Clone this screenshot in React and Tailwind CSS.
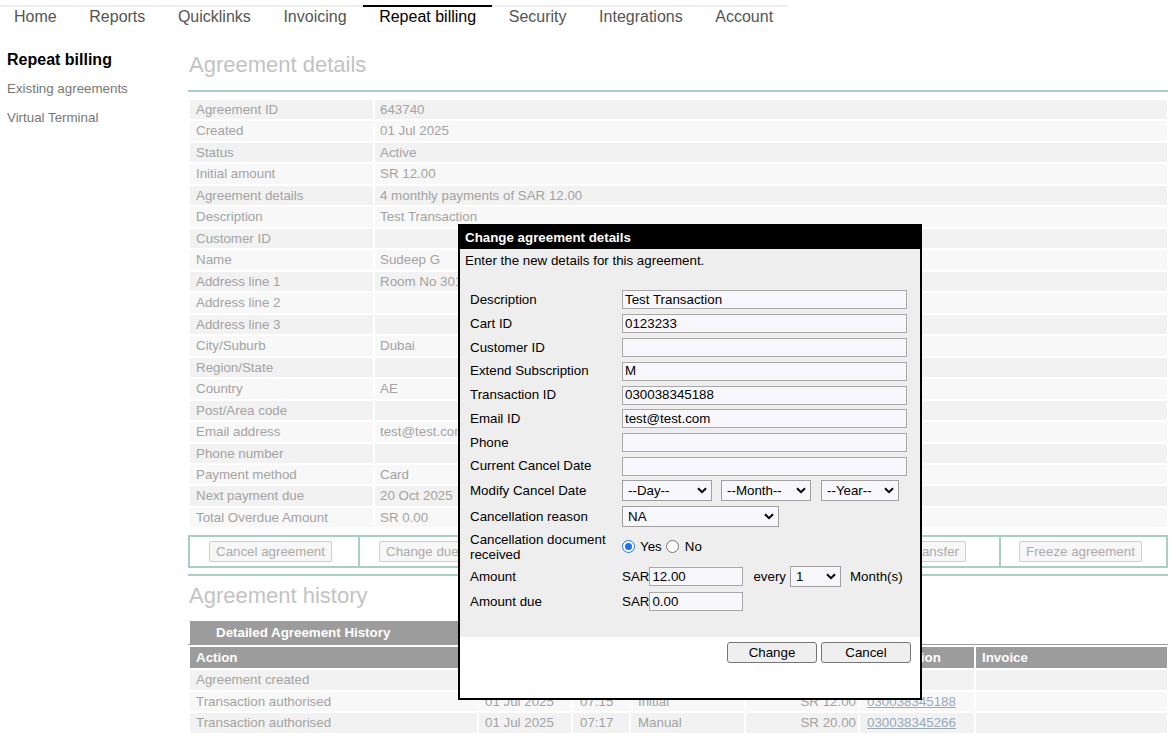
import React from "react";

const tabs = ["Home", "Reports", "Quicklinks", "Invoicing", "Repeat billing", "Security", "Integrations", "Account"];

const details = [
  ["Agreement ID", "643740"],
  ["Created", "01 Jul 2025"],
  ["Status", "Active"],
  ["Initial amount", "SR 12.00"],
  ["Agreement details", "4 monthly payments of SAR 12.00"],
  ["Description", "Test Transaction"],
  ["Customer ID", ""],
  ["Name", "Sudeep G"],
  ["Address line 1", "Room No 301"],
  ["Address line 2", ""],
  ["Address line 3", ""],
  ["City/Suburb", "Dubai"],
  ["Region/State", ""],
  ["Country", "AE"],
  ["Post/Area code", ""],
  ["Email address", "test@test.com"],
  ["Phone number", ""],
  ["Payment method", "Card"],
  ["Next payment due", "20 Oct 2025"],
  ["Total Overdue Amount", "SR 0.00"],
];

const history = [
  ["Agreement created", "", "", "", "", ""],
  ["Transaction authorised", "01 Jul 2025", "07:15", "Initial", "SR 12.00", "030038345188"],
  ["Transaction authorised", "01 Jul 2025", "07:17", "Manual", "SR 20.00", "030038345266"],
];

function Chevron() {
  return (
    <svg width="10" height="7" viewBox="0 0 10 7" className="shrink-0">
      <path d="M1 1.2 L5 5.2 L9 1.2" fill="none" stroke="#000" strokeWidth="2" />
    </svg>
  );
}

function Select({ value, w }) {
  return (
    <div className={`flex h-[21px] items-center justify-between border border-[#a0a0a0] bg-[#f7f7fc] pl-[5px] pr-[4px] ${w}`}>
      <span>{value}</span>
      <Chevron />
    </div>
  );
}

function Input({ value = "", w = "w-[285px]" }) {
  return (
    <div className={`flex h-[19px] items-center border border-[#a8a8a8] bg-[#f7f7fc] pl-[2px] ${w}`}>
      {value}
    </div>
  );
}

function FormRow({ label, h, children, labelCls = "" }) {
  return (
    <div className={`flex items-center ${h}`}>
      <div className={`w-[152px] shrink-0 ${labelCls}`}>{label}</div>
      <div className="flex items-center">{children}</div>
    </div>
  );
}

function BgButton({ children }) {
  return (
    <div className="inline-flex h-[21px] items-center whitespace-nowrap rounded-[2px] border border-[#cfcfcf] bg-[#f7f7f7] px-[6px] text-[#ababab]">
      {children}
    </div>
  );
}

export default function App() {
  return (
    <div className="relative h-[736px] w-[1172px] overflow-hidden bg-white font-['Liberation_Sans',Arial,sans-serif] text-[13.33px]">
      {/* Top navigation */}
      <div className="h-[28px] pt-[5px]">
        <div className="flex w-[788px] border-t-2 border-[#eeeeee]">
          {tabs.map((t, i) => (
            <div
              key={t}
              className={`-mt-[2px] shrink-0 whitespace-nowrap border-t-2 px-[16.3px] pt-[1px] text-[16px] leading-[18px] ${i === 0 ? "-ml-[2.3px]" : ""} ${
                t === "Repeat billing" ? "border-black text-black" : "border-transparent text-[#555]"
              }`}
            >
              {t}
            </div>
          ))}
        </div>
      </div>

      <div className="flex">
        {/* Sidebar */}
        <div className="w-[188px] shrink-0 pl-[7px]">
          <div className="mt-[22px] text-[16px] font-bold leading-[20px] text-black">Repeat billing</div>
          <div className="mt-[10px] leading-[18px] text-[#777]">Existing agreements</div>
          <div className="mt-[11px] leading-[18px] text-[#777]">Virtual Terminal</div>
        </div>

        {/* Main */}
        <div className="w-[980px] shrink-0">
          <div className="mt-[24px] pl-[1px] text-[22px] leading-[26px] text-[#c3c3c3]">Agreement details</div>
          <div className="mt-[12px] h-[2px] bg-[#a7d0c1]" />
          <div className="mt-[8px] flex flex-col gap-[2px] pl-[2px] pr-[1px] text-[#a3a3a3]">
            {details.map(([l, v], i) => (
              <div key={l} className="flex gap-[2px]">
                <div className={`h-[19.47px] w-[183px] shrink-0 pl-[6px] leading-[19.47px] ${i % 2 ? "bg-[#f8f8f8]" : "bg-[#f2f2f2]"}`}>{l}</div>
                <div className={`h-[19.47px] flex-1 pl-[5px] leading-[19.47px] ${i % 2 ? "bg-[#f8f8f8]" : "bg-[#f2f2f2]"}`}>{v}</div>
              </div>
            ))}
          </div>

          {/* Action buttons */}
          <div className="mt-[8px] flex h-[33px] border-2 border-[#a7d0c1]">
            <div className="flex w-[168px] items-center pl-[19px]">
              <BgButton>Cancel agreement</BgButton>
            </div>
            <div className="flex w-[321px] items-center border-l-2 border-[#a7d0c1] pl-[19px]">
              <BgButton>Change due date</BgButton>
            </div>
            <div className="flex w-[320px] items-center justify-end border-l-2 border-[#a7d0c1] pr-[33px]">
              <BgButton>Card transfer</BgButton>
            </div>
            <div className="flex flex-1 items-center border-l-2 border-[#a7d0c1] pl-[18px]">
              <BgButton>Freeze agreement</BgButton>
            </div>
          </div>
          <div className="mt-[6px] h-[2px] bg-[#a7d0c1]" />

          <div className="mt-[7px] pl-[1px] text-[22px] leading-[26px] text-[#c3c3c3]">Agreement history</div>

          <div className="mt-[12px] border-b border-[#9c9c9c] pl-[2px]">
            <div className="flex h-[23px] w-[272px] items-center bg-[#9c9c9c] pl-[26px] font-bold text-white">
              Detailed Agreement History
            </div>
          </div>
          <div className="mt-[2px] flex flex-col gap-[2px] pl-[2px] pr-[1px]">
            <div className="flex h-[21px] gap-[2px] font-bold text-white">
              <div className="w-[287px] bg-[#9c9c9c] pl-[6px] leading-[21px]">Action</div>
              <div className="w-[92px] bg-[#9c9c9c] pl-[6px] leading-[21px]">Date</div>
              <div className="w-[56px] bg-[#9c9c9c] pl-[6px] leading-[21px]">Time</div>
              <div className="w-[113px] bg-[#9c9c9c] pl-[6px] leading-[21px]">Type</div>
              <div className="w-[112px] bg-[#9c9c9c] pl-[6px] leading-[21px]">Amount</div>
              <div className="w-[114px] bg-[#9c9c9c] pl-[6px] leading-[21px]">Transaction</div>
              <div className="flex-1 bg-[#9c9c9c] pl-[6px] leading-[21px]">Invoice</div>
            </div>
            {history.map((r, i) => {
              const bg = i % 2 ? "bg-[#f8f8f8]" : "bg-[#f2f2f2]";
              return (
                <div key={i} className="flex h-[19.5px] gap-[2px] leading-[19.5px] text-[#a3a3a3]">
                  <div className={`w-[287px] pl-[6px] ${bg}`}>{r[0]}</div>
                  <div className={`w-[92px] pl-[6px] ${bg}`}>{r[1]}</div>
                  <div className={`w-[56px] pl-[7px] ${bg}`}>{r[2]}</div>
                  <div className={`w-[113px] pl-[7px] ${bg}`}>{r[3]}</div>
                  <div className={`w-[112px] pr-[2px] text-right ${bg}`}>{r[4]}</div>
                  <div className={`w-[114px] pl-[7px] text-[#98a9b6] underline ${bg}`}>{r[5]}</div>
                  <div className={`flex-1 ${bg}`}></div>
                </div>
              );
            })}
          </div>
        </div>
      </div>

      {/* Modal dialog */}
      <div className="absolute left-[458px] top-[224px] flex h-[476px] w-[464px] flex-col border-2 border-black bg-white text-black">
        <div className="flex h-[23px] items-center bg-black pl-[5px] font-bold text-white">Change agreement details</div>
        <div className="h-[388px] bg-[#eeeeee] pl-[5px]">
          <div className="mt-[3px] leading-[17px]">Enter the new details for this agreement.</div>
          <div className="mt-[19px] pl-[5px]">
            <FormRow label="Description" h="h-[23.8px]"><Input value="Test Transaction" /></FormRow>
            <FormRow label="Cart ID" h="h-[23.8px]"><Input value="0123233" /></FormRow>
            <FormRow label="Customer ID" h="h-[23.8px]"><Input /></FormRow>
            <FormRow label="Extend Subscription" h="h-[23.8px]"><Input value="M" /></FormRow>
            <FormRow label="Transaction ID" h="h-[23.8px]"><Input value="030038345188" /></FormRow>
            <FormRow label="Email ID" h="h-[23.8px]"><Input value="test@test.com" /></FormRow>
            <FormRow label="Phone" h="h-[23.8px]"><Input /></FormRow>
            <FormRow label="Current Cancel Date" h="h-[23.8px]"><Input /></FormRow>
            <FormRow label="Modify Cancel Date" h="h-[25px]">
              <Select value="--Day--" w="w-[90px]" />
              <div className="ml-[9px]"><Select value="--Month--" w="w-[90px]" /></div>
              <div className="ml-[10px]"><Select value="--Year--" w="w-[78px]" /></div>
            </FormRow>
            <FormRow label="Cancellation reason" h="h-[27px]">
              <Select value="NA" w="w-[157px]" />
            </FormRow>
            <FormRow label="Cancellation document received" h="h-[33px]" labelCls="leading-[15px] pr-[10px]">
              <div className="flex h-[13px] w-[13px] items-center justify-center rounded-full border-[1.5px] border-[#1a73e8] bg-white">
                <div className="h-[7px] w-[7px] rounded-full bg-[#1a73e8]" />
              </div>
              <span className="ml-[5px]">Yes</span>
              <div className="ml-[4px] h-[13px] w-[13px] rounded-full border border-[#767676] bg-white" />
              <span className="ml-[6px]">No</span>
            </FormRow>
            <FormRow label="Amount" h="h-[27px]">
              <span>SAR</span>
              <Input value="12.00" w="w-[94px]" />
              <span className="ml-[10px]">every</span>
              <div className="ml-[4px]"><Select value="1" w="w-[51px]" /></div>
              <span className="ml-[9px]">Month(s)</span>
            </FormRow>
            <FormRow label="Amount due" h="h-[23px]">
              <span>SAR</span>
              <Input value="0.00" w="w-[94px]" />
            </FormRow>
          </div>
        </div>
        <div className="flex justify-end gap-[4px] pr-[9px] pt-[5px]">
          <div className="flex h-[21px] w-[90px] items-center justify-center rounded-[3px] border border-[#767676] bg-[#efefef]">Change</div>
          <div className="flex h-[21px] w-[90px] items-center justify-center rounded-[3px] border border-[#767676] bg-[#efefef]">Cancel</div>
        </div>
      </div>
    </div>
  );
}
